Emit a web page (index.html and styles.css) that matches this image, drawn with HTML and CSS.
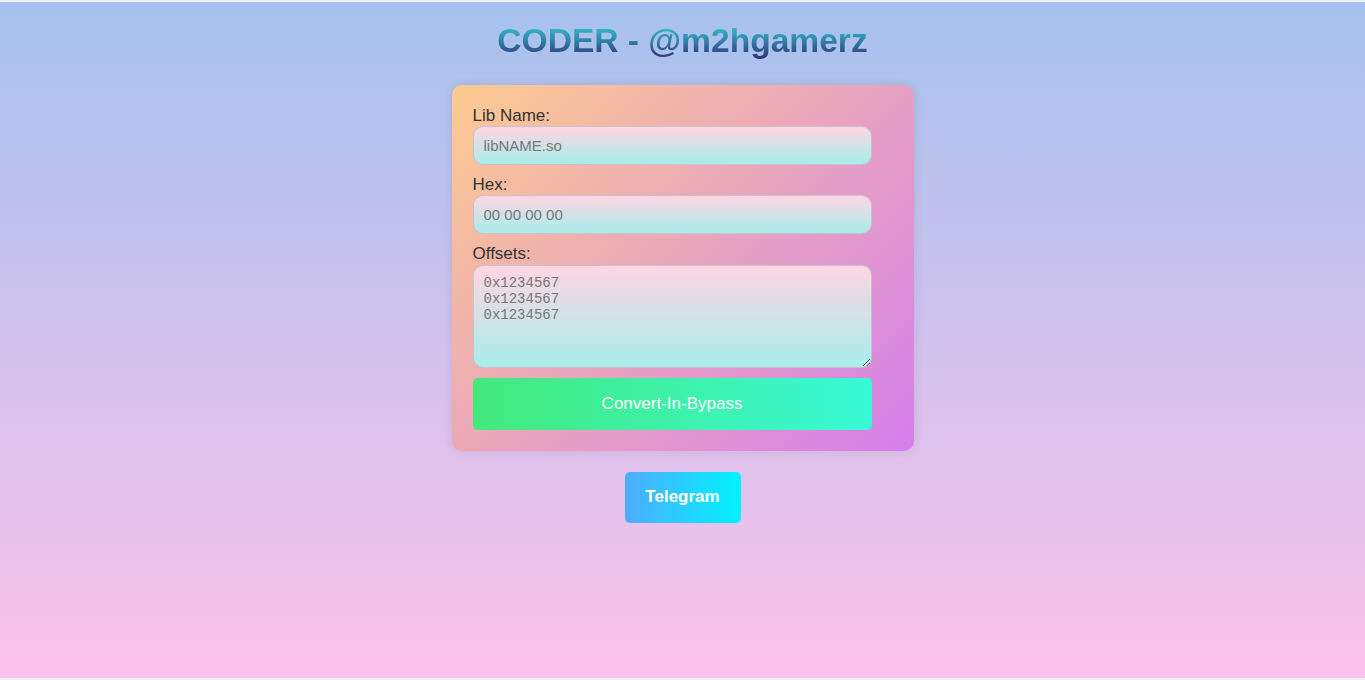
FILE: index.html
```html
<!DOCTYPE html>
<html lang="en">
<head>
<meta charset="utf-8">
<title>CODER - @m2hgamerz</title>
<link rel="stylesheet" href="styles.css">
</head>
<body>
<div class="page">
  <h1 class="title">CODER - @m2hgamerz</h1>
  <form class="card">
    <label class="label" for="lib">Lib Name:</label>
    <input class="field" id="lib" type="text" placeholder="libNAME.so">
    <label class="label" for="hex">Hex:</label>
    <input class="field" id="hex" type="text" placeholder="00 00 00 00">
    <label class="label" for="offs">Offsets:</label>
    <textarea class="field area" id="offs" placeholder="0x1234567&#10;0x1234567&#10;0x1234567"></textarea>
    <button class="convert" type="button">Convert-In-Bypass</button>
  </form>
  <a class="telegram" href="#">Telegram</a>
</div>
</body>
</html>
```
FILE: styles.css
```css
html {
  background: #eceef4;
}
body {
  margin: 0;
  font-family: "Liberation Sans", Arial, sans-serif;
}
.page {
  margin: 2px 0 0;
  height: 676px;
  background: linear-gradient(to bottom, #a6c1ee 0%, #fbc2eb 100%);
  display: flex;
  flex-direction: column;
  align-items: center;
}
.title {
  margin: 0;
  padding-top: 21px;
  height: 66px;
  box-sizing: border-box;
  font-size: 33.6px;
  line-height: 36px;
  font-weight: bold;
  background: linear-gradient(to bottom, #30cfd0 0%, #330867 100%);
  background-origin: content-box;
  -webkit-background-clip: text;
  background-clip: text;
  color: transparent;
  -webkit-text-fill-color: transparent;
}
.card {
  width: 420px;
  padding: 21px;
  margin-top: 17px;
  border-radius: 10px;
  background: linear-gradient(135deg, #fccb90 0%, #d57eeb 100%);
  box-shadow: 0 0 10px rgba(0, 0, 0, 0.1);
  display: flex;
  flex-direction: column;
}
.label {
  font-size: 17px;
  line-height: 20px;
  color: #333;
}
.field {
  width: 399px;
  height: 39px;
  box-sizing: border-box;
  padding: 10px;
  margin: 0 0 10px;
  border: 1px solid rgba(200, 190, 200, 0.9);
  border-radius: 10px;
  background: linear-gradient(to top, #a8edea 0%, #fed6e3 100%);
  font-family: "Liberation Sans", Arial, sans-serif;
  font-size: 15px;
  color: #333;
  outline: none;
}
.field::placeholder {
  color: #777;
}
.area {
  height: 103px;
  margin-top: 1px;
  padding: 9px 10px;
  font-family: "Liberation Mono", "Courier New", monospace;
  font-size: 14px;
  line-height: 16px;
  resize: vertical;
}
.convert {
  width: 399px;
  height: 52px;
  border: none;
  border-radius: 5px;
  background: linear-gradient(to right, #43e97b 0%, #38f9d7 100%);
  color: #fff;
  font-family: "Liberation Sans", Arial, sans-serif;
  font-size: 17px;
  cursor: pointer;
}
.telegram {
  margin-top: 21px;
  padding-bottom: 1px;
  box-sizing: border-box;
  width: 116px;
  height: 51px;
  border-radius: 5px;
  background: linear-gradient(to right, #4facfe 0%, #00f2fe 100%);
  color: #fff;
  font-weight: bold;
  font-size: 17px;
  text-decoration: none;
  display: flex;
  align-items: center;
  justify-content: center;
}
```
